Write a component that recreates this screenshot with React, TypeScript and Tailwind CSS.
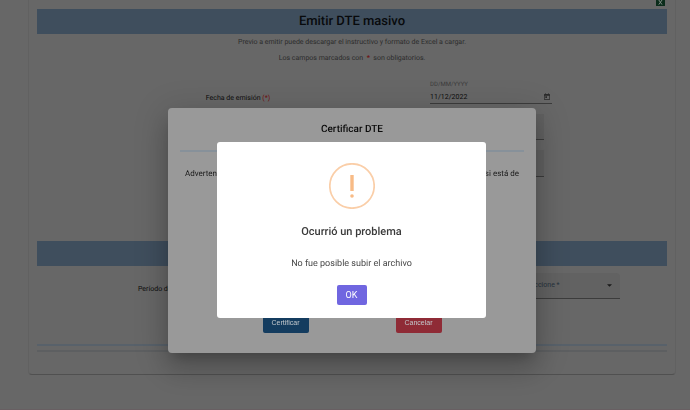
import type { ReactNode } from "react";

const face = "font-['Roboto','Liberation_Sans',sans-serif] [text-rendering:geometricPrecision]";

function Band({ children }: { children?: ReactNode }) {
  return (
    <div className="flex h-[25px] items-center justify-center bg-[#3f4e5d]">
      {children}
    </div>
  );
}

function ExcelIcon() {
  return (
    <svg viewBox="0 0 9 6" className="h-[6px] w-[9px]" aria-hidden="true">
      <path d="M0 0H9V5.4Q9 6 8.4 6H.6Q0 6 0 5.4Z" fill="#0b2c1b" />
      <path d="M2.8 0L6 4.6M6 0L2.8 4.6" stroke="#7d8a82" strokeWidth="1" fill="none" />
    </svg>
  );
}

function CalendarIcon() {
  return (
    <svg viewBox="0 0 24 24" className="h-2 w-2" fill="#2a2a2a" aria-hidden="true">
      <path d="M19 3h-1V1h-2v2H8V1H6v2H5c-1.1 0-2 .9-2 2v14c0 1.100.9 2 2 2h14c1.100 0 2-.9 2-2V5c0-1.100-.9-2-2-2zm0 16H5V8h14v11zM7 10h5v5H7z" />
    </svg>
  );
}

function MassForm() {
  return (
    <main className="mr-3.5 ml-7 rounded-b border border-t-0 border-[#616161] border-b-[#505050] px-2 pb-[22px]">
      <div className="flex h-[9px] items-start justify-end pr-0.5">
        <ExcelIcon />
      </div>
      <Band>
        <h1 className="text-[13px] leading-5 font-medium text-[#080a0c]">Emitir DTE masivo</h1>
      </Band>
      <div className="text-center text-[7px] leading-4 text-[#2c2c2c]">
        <p>Previo a emitir puede descargar el instructivo y formato de Excel a cargar.</p>
        <p>
          Los campos marcados con &nbsp;<span className="font-bold text-[#6e1010]">*</span>&nbsp; son
          obligatorios.
        </p>
      </div>
      <div className="mt-3.5 grid grid-cols-[37fr_63fr] gap-y-2.5">
        <label htmlFor="issue-date" className="pt-3 text-right text-[7px] leading-3 text-[#0c0c0c]">
          Fecha de emisión <span className="text-[#6e1010]">(*)</span>
        </label>
        <div className="pl-40">
          <div className="w-[122px] border-b border-[#3c3c3c]">
            <div className="text-[6px] leading-[10px] text-[#3a3a3a]">DD/MM/YYYY</div>
            <div className="flex h-[13px] items-center justify-between pr-px">
              <input
                id="issue-date"
                defaultValue="11/12/2022"
                className="w-20 text-[7px] leading-3 text-[#0c0c0c] outline-none"
              />
              <button type="button" aria-label="Abrir calendario">
                <CalendarIcon />
              </button>
            </div>
          </div>
        </div>
        <div className="col-start-2 pl-40">
          <input
            aria-label="Archivo"
            className="block h-[26px] w-[114px] border-b border-[#3c3c3c] bg-[#616161]"
          />
        </div>
        <div className="col-start-2 pl-40">
          <input
            aria-label="Observaciones"
            className="block h-[27px] w-[114px] border-b border-[#3c3c3c] bg-[#616161]"
          />
        </div>
      </div>
      <div className="mt-16">
        <Band />
      </div>
      <div className="mt-[7px] flex items-center justify-between pr-[47px] pl-[101px]">
        <label htmlFor="period" className="pt-1.5 text-[7px] leading-3 text-[#0c0c0c]">
          Período de emisión
        </label>
        <div className="relative">
          <select
            id="period"
            className="block h-[26px] w-[113px] appearance-none rounded-t-sm border-b border-[#3c3c3c] bg-[#626262] pl-3.5 text-[7px] text-[#27323d]"
          >
            <option>Seleccione *</option>
          </select>
          <svg
            viewBox="0 0 10 5"
            className="pointer-events-none absolute top-[11px] right-2 h-[3px] w-[5px]"
            fill="#1a1a1a"
            aria-hidden="true"
          >
            <path d="M0 0h10L5 5z" />
          </svg>
        </div>
      </div>
      <hr className="mt-[45px] border-t-2 border-[#58616a]" />
      <hr className="mt-1 border-t-2 border-[#5d5f61]" />
    </main>
  );
}

function CertifyDialog() {
  return (
    <div className="fixed inset-0 flex items-center justify-center pt-[50px] pl-3.5">
      <section
        role="dialog"
        aria-labelledby="certify-title"
        className="flex h-[245px] w-[368px] flex-col rounded-sm bg-[#999] px-3 shadow-[0_8px_11px_-5px_rgba(0,0,0,0.2),0_17px_27px_2px_rgba(0,0,0,0.14),0_6px_32px_6px_rgba(0,0,0,0.12)]"
      >
        <h2 id="certify-title" className="pt-3 text-center text-[10px] leading-5 font-medium text-[#0a0a0a]">
          Certificar DTE
        </h2>
        <hr className="mt-2.5 border-t-2 border-[#87919a]" />
        <p className="mt-3.5 flex justify-between px-[5px] text-[8px] leading-4 text-[#1a1a1a]">
          <span>Advertencia,</span>
          <span>si está de</span>
        </p>
        <div className="mt-auto mb-5 flex justify-center gap-[87px] font-['Liberation_Sans',sans-serif] text-[7px] text-[#c3c8cc]">
          <button type="button" className="h-[19px] w-[46px] rounded-xs bg-[#143c5f]">
            Certificar
          </button>
          <button type="button" className="h-[19px] w-[46px] rounded-xs bg-[#8f2b36]">
            Cancelar
          </button>
        </div>
      </section>
    </div>
  );
}

function ProblemAlert() {
  return (
    <div className="fixed inset-0 flex items-center justify-center pt-[50px] pl-[13px]">
      <section
        role="alertdialog"
        aria-labelledby="alert-title"
        className="flex w-[269px] flex-col items-center rounded-[3px] bg-white pt-[21px] pb-[13px]"
      >
        <svg viewBox="0 0 46 46" className="size-[46px]" fill="none" aria-hidden="true">
          <circle cx="23" cy="23" r="22.2" stroke="#facea8" strokeWidth="1.7" />
          <path d="M21.300 12h3.400v16h-3.400z" fill="#f8bb86" />
          <circle cx="23" cy="33" r="1.800" fill="#f8bb86" />
        </svg>
        <h2 id="alert-title" className="mt-[13px] text-[11px] leading-5 font-medium text-[#3a3a3a]">
          Ocurrió un problema
        </h2>
        <p className="mt-3 text-[9px] leading-5 text-[#484848]">No fue posible subir el archivo</p>
        <button
          type="button"
          className="mt-[11px] h-5 w-[30px] rounded-xs bg-[#7066e0] text-[9px] leading-5 text-white"
        >
          OK
        </button>
      </section>
    </div>
  );
}

export default function App() {
  return (
    <div className={`min-h-screen border-b border-[#685f62] bg-[#676767] ${face}`}>
      <MassForm />
      <CertifyDialog />
      <ProblemAlert />
    </div>
  );
}
